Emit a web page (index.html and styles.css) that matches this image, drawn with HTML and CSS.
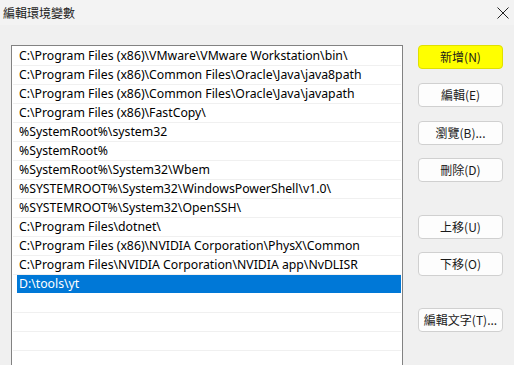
FILE: index.html
```html
<!DOCTYPE html>
<html>
<head>
<meta charset="utf-8">
<link rel="stylesheet" href="styles.css">
</head>
<body>
<div class="titlebar">
  <span class="title">編輯環境變數</span>
  <svg class="close" width="12" height="12" viewBox="0 0 12 12"><path d="M0.5 0.5 L11.5 11.5 M11.5 0.5 L0.5 11.5" stroke="#222" stroke-width="1"/></svg>
</div>
<div class="content">
  <div class="list">
    <div class="row">C:\Program Files (x86)\VMware\VMware Workstation\bin\</div>
    <div class="row">C:\Program Files (x86)\Common Files\Oracle\Java\java8path</div>
    <div class="row">C:\Program Files (x86)\Common Files\Oracle\Java\javapath</div>
    <div class="row">C:\Program Files (x86)\FastCopy\</div>
    <div class="row">%SystemRoot%\system32</div>
    <div class="row">%SystemRoot%</div>
    <div class="row">%SystemRoot%\System32\Wbem</div>
    <div class="row">%SYSTEMROOT%\System32\WindowsPowerShell\v1.0\</div>
    <div class="row">%SYSTEMROOT%\System32\OpenSSH\</div>
    <div class="row">C:\Program Files\dotnet\</div>
    <div class="row">C:\Program Files (x86)\NVIDIA Corporation\PhysX\Common</div>
    <div class="row">C:\Program Files\NVIDIA Corporation\NVIDIA app\NvDLISR</div>
    <div class="row selected">D:\tools\yt</div>
    <div class="row"></div>
    <div class="row"></div>
    <div class="row"></div>
  </div>
  <div class="buttons">
    <div class="btn primary">新增(N)</div>
    <div class="btn">編輯(E)</div>
    <div class="btn b3">瀏覽(B)...</div>
    <div class="btn">刪除(D)</div>
    <div class="btn gap1">上移(U)</div>
    <div class="btn">下移(O)</div>
    <div class="btn gap2">編輯文字(T)...</div>
  </div>
</div>
</body>
</html>
```
FILE: styles.css
```css
html, body {
  margin: 0;
  padding: 0;
  background: #f0f0f0;
  height: 365px;
  overflow: hidden;
  font-family: "Noto Sans", "Noto Sans CJK TC", sans-serif;
  font-size: 12px;
  color: #000;
}
.titlebar {
  height: 25px;
  display: flex;
  align-items: center;
  justify-content: space-between;
  padding: 0 5px 0 3px;
  background: #f3f3f3;
}
.title {
  font-family: "Noto Sans CJK TC", sans-serif;
  font-size: 12px;
  color: #1a1a1a;
}
.close {
  display: block;
}
.content {
  display: flex;
  padding: 20px 0 0 11px;
}
.list {
  width: 390px;
  height: 319px;
  background: #fff;
  border: 1px solid #828282;
  border-bottom: none;
  padding-top: 1px;
  overflow: hidden;
}
.row {
  height: 18px;
  line-height: 18px;
  border-bottom: 1px solid #f0f0f0;
  margin: 0 1px;
  padding-left: 6px;
  white-space: nowrap;
  overflow: hidden;
  font-size: 12.25px;
}
.row.selected {
  background: #0078d7;
  color: #fff;
  margin-left: 5px;
  padding-left: 2px;
  border-bottom-color: #fff;
}
.buttons {
  display: flex;
  flex-direction: column;
  margin-left: 15px;
  width: 85px;
}
.btn {
  height: 22px;
  line-height: 22px;
  border: 1px solid #d0d0d0;
  border-radius: 4px;
  background: #fdfdfd;
  text-align: center;
  font-family: "Noto Sans CJK TC", sans-serif;
  font-size: 12px;
  color: #1a1a1a;
  margin-bottom: 14px;
}
.btn.primary {
  background: #ffff00;
  border-color: #e0e000;
}
.btn.b3 {
  margin-bottom: 13px;
}
.btn.gap1 {
  margin-top: 19px;
  margin-bottom: 13px;
}
.btn.gap2 {
  margin-top: 18px;
}
```
